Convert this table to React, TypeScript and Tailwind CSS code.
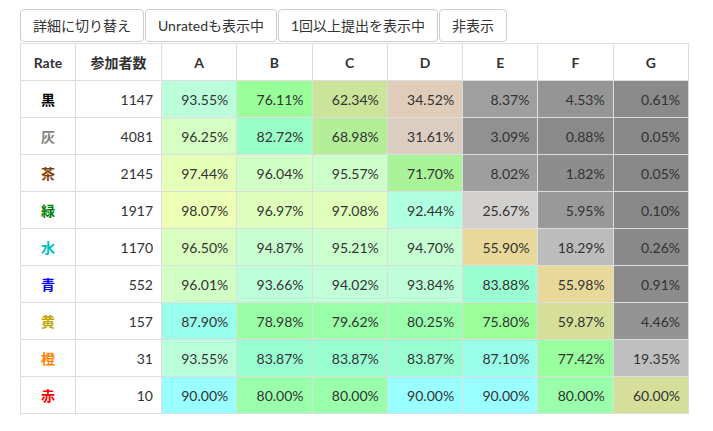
import React from "react";

const stops: [number, string][] = [
  [0, "#888888"],
  [10, "#a4a4a4"],
  [25, "#d0d0d0"],
  [35, "#e0ccb8"],
  [56, "#e8d89a"],
  [62, "#cce39a"],
  [70, "#b0f099"],
  [76, "#99ff99"],
  [80, "#99ffaa"],
  [84, "#99ffd4"],
  [88, "#99ffee"],
  [90, "#99ffff"],
  [92.5, "#b0ffe0"],
  [94, "#c0ffd8"],
  [95.5, "#ccffcc"],
  [96.5, "#d8ffc0"],
  [98, "#ecffb4"],
  [100, "#f8ffaa"],
];

function hex(h: string): number[] {
  return [1, 3, 5].map((i) => parseInt(h.slice(i, i + 2), 16));
}

function colorFor(v: number): string {
  for (let i = 0; i < stops.length - 1; i++) {
    const [a, ca] = stops[i];
    const [b, cb] = stops[i + 1];
    if (v >= a && v <= b) {
      const t = (v - a) / (b - a);
      const x = hex(ca);
      const y = hex(cb);
      const r = x.map((c, k) => Math.round(c + (y[k] - c) * t));
      return `rgb(${r[0]},${r[1]},${r[2]})`;
    }
  }
  return stops[stops.length - 1][1];
}

const rows: { name: string; cls: string; n: number; v: number[] }[] = [
  { name: "黒", cls: "text-[#000000]", n: 1147, v: [93.55, 76.11, 62.34, 34.52, 8.37, 4.53, 0.61] },
  { name: "灰", cls: "text-[#808080]", n: 4081, v: [96.25, 82.72, 68.98, 31.61, 3.09, 0.88, 0.05] },
  { name: "茶", cls: "text-[#804000]", n: 2145, v: [97.44, 96.04, 95.57, 71.7, 8.02, 1.82, 0.05] },
  { name: "緑", cls: "text-[#008000]", n: 1917, v: [98.07, 96.97, 97.08, 92.44, 25.67, 5.95, 0.1] },
  { name: "水", cls: "text-[#00c0c0]", n: 1170, v: [96.5, 94.87, 95.21, 94.7, 55.9, 18.29, 0.26] },
  { name: "青", cls: "text-[#0000ff]", n: 552, v: [96.01, 93.66, 94.02, 93.84, 83.88, 55.98, 0.91] },
  { name: "黄", cls: "text-[#c0a800]", n: 157, v: [87.9, 78.98, 79.62, 80.25, 75.8, 59.87, 4.46] },
  { name: "橙", cls: "text-[#ff8000]", n: 31, v: [93.55, 83.87, 83.87, 83.87, 87.1, 77.42, 19.35] },
  { name: "赤", cls: "text-[#ff0000]", n: 10, v: [90.0, 80.0, 80.0, 90.0, 90.0, 80.0, 60.0] },
];

const problems = ["A", "B", "C", "D", "E", "F", "G"];

export default function App() {
  return (
    <div
      className="w-[713px] h-[431px] bg-white text-[#333333] text-[14px]"
      style={{ fontFamily: 'Lato, "Noto Sans CJK JP", sans-serif' }}
    >
      <div className="pl-[20px] pt-[9px]">
        <div className="flex gap-[1px]">
          {["詳細に切り替え", "Unratedも表示中", "1回以上提出を表示中", "非表示"].map((t) => (
            <button
              key={t}
              className="h-[33px] px-[12px] border border-[#cccccc] rounded-[4px] bg-white text-[#333333] text-[14px] leading-none"
            >
              {t}
            </button>
          ))}
        </div>
        <table className="table-fixed border-collapse w-[669px] mt-[1px]">
          <colgroup>
            <col className="w-[55px]" />
            <col className="w-[86px]" />
            {problems.map((p) => (
              <col key={p} />
            ))}
          </colgroup>
          <thead>
            <tr className="h-[37px]">
              <th className="border border-[#dddddd] font-bold text-center px-2">Rate</th>
              <th className="border border-[#dddddd] font-bold text-center px-2">参加者数</th>
              {problems.map((p) => (
                <th key={p} className="border border-[#dddddd] font-bold text-center px-2">
                  {p}
                </th>
              ))}
            </tr>
          </thead>
          <tbody>
            {rows.map((r) => (
              <tr key={r.name} className="h-[37px]">
                <td className={`border border-[#dddddd] text-center font-bold px-2 ${r.cls}`}>{r.name}</td>
                <td className="border border-[#dddddd] text-right px-2">{r.n}</td>
                {r.v.map((v, i) => (
                  <td
                    key={i}
                    className="border border-[#dddddd] text-right px-2"
                    style={{ backgroundColor: colorFor(v) }}
                  >
                    {v.toFixed(2)}%
                  </td>
                ))}
              </tr>
            ))}
          </tbody>
        </table>
      </div>
    </div>
  );
}
